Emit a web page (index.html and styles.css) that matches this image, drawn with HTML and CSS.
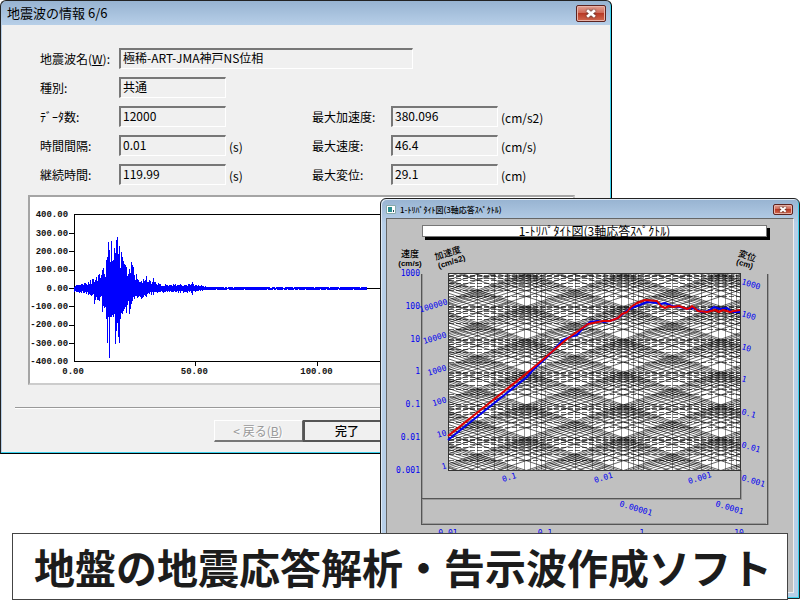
FILE: index.html
```html
<!DOCTYPE html>
<html lang="ja">
<head>
<meta charset="utf-8">
<title>地盤の地震応答解析・告示波作成ソフト</title>
<link rel="stylesheet" href="styles.css">
</head>
<body>
<main class="desktop">
  <section class="window wave-window">
    <header class="titlebar">
      <h1 class="caption">地震波の情報 6/6</h1>
      <button class="close" type="button" aria-label="閉じる"><svg viewBox="0 0 12 10"><path d="M3 2.5 9 7.5M9 2.5 3 7.5"/></svg></button>
    </header>
    <form class="wave-body">
      <div class="fields">
        <label class="label" for="name">地震波名(<u>W</u>):</label>
        <input class="field wide" id="name" value="極稀-ART-JMA神戸NS位相" readonly>
        <label class="label first" for="kind">種別:</label>
        <input class="field" id="kind" value="共通" readonly>
        <label class="label first" for="count">ﾃﾞｰﾀ数:</label>
        <input class="field" id="count" value="12000" readonly>
        <label class="label second" for="acc">最大加速度:</label>
        <input class="field" id="acc" value="380.096" readonly>
        <span class="unit">(cm/s2)</span>
        <label class="label first" for="step">時間間隔:</label>
        <input class="field" id="step" value="0.01" readonly>
        <span class="unit">(s)</span>
        <label class="label second" for="vel">最大速度:</label>
        <input class="field" id="vel" value="46.4" readonly>
        <span class="unit">(cm/s)</span>
        <label class="label first" for="dur">継続時間:</label>
        <input class="field" id="dur" value="119.99" readonly>
        <span class="unit">(s)</span>
        <label class="label second" for="dis">最大変位:</label>
        <input class="field" id="dis" value="29.1" readonly>
        <span class="unit">(cm)</span>
      </div>
      <svg class="wave-chart" viewBox="30 197 542 186">
        <path class="axis" d="M381 214.5H74.5V361.5H560V214.5H380M74 288.5H560M69 233.5H74M69 251.5H74M69 270.5H74M69 288.5H74M69 306.5H74M69 325.5H74M69 343.5H74M195.5 361V366M316.5 361V366"/>
        <path class="wave" id="wave"/>
        <g class="ylabels">
          <text x="68" y="217">400.00</text><text x="68" y="236">300.00</text><text x="68" y="254">200.00</text><text x="68" y="272">100.00</text><text x="68" y="291">0.00</text><text x="68" y="309">-100.00</text><text x="68" y="327">-200.00</text><text x="68" y="346">-300.00</text><text x="68" y="364">-400.00</text>
        </g>
        <g class="xlabels">
          <text x="73" y="374">0.00</text><text x="194" y="374">50.00</text><text x="316" y="374">100.00</text>
        </g>
      </svg>
      <div class="actions">
        <button class="push" type="button" disabled>&lt; 戻る(<u>B</u>)</button>
        <button class="push default" type="button">完了</button>
      </div>
    </form>
  </section>

  <section class="window spectrum-window">
    <header class="titlebar">
      <svg class="app-icon" viewBox="0 0 10 9"><path fill="#fff" stroke="#8aa" d="M.5.5h9v8h-9z"/><path fill="#2a8f8f" d="M2 2h4v5H2z"/><path fill="#245" d="M7 5h1v2H7z"/></svg>
      <h2 class="caption">1-ﾄﾘﾊﾟﾀｲﾄ図(3軸応答ｽﾍﾟｸﾄﾙ)</h2>
      <button class="close" type="button" aria-label="閉じる"><svg viewBox="0 0 12 10"><path d="M3 2.5 9 7.5M9 2.5 3 7.5"/></svg></button>
    </header>
    <div class="client">
      <h3 class="plot-title">1-ﾄﾘﾊﾟﾀｲﾄ図(3軸応答ｽﾍﾟｸﾄﾙ)</h3>
      <svg class="plot" viewBox="387 240 406 352">
        <defs><clipPath id="area"><rect x="448" y="273" width="292" height="198"/></clipPath></defs>
        <path class="frame-light" d="M422.5 274V523.5H766M741.5 470V499.5H423M768.5 274V525"/>
        <path class="frame" d="M421.5 274V524.5H767.5V274M740.5 470V498.5H422"/>
        <rect x="448" y="273" width="292" height="198" fill="#fff"/>
        <g clip-path="url(#area)">
          <path class="slanted" id="slanted"/>
          <path class="columns" id="columns"/>
          <path class="rows" id="rows"/>
        </g>
        <rect class="border" x="448.5" y="273.5" width="292" height="197"/>
        <polyline class="blue" points="448,440 527,377 532,371 547,357 563,340 570,337 577,335 583,328 590,322 598,321 604,322 610,321 618,318 628,310 634,307 640,305 647,302 657,303 661,304 665,303 672,306 680,307 687,309 693,308 702,312 708,311 714,307 720,309 727,308 732,312 740,312"/>
        <polyline class="red" points="448,436 527,373 547,356 567,339 588,324 598,322 603,321 610,321 618,318 622,314 627,312 631,307 637,303 645,300 657,301 661,306 665,308 669,306 673,307 679,306 687,309 690,308 692,306 698,311 707,312 715,310 719,312 723,310 730,312 734,311 740,310"/>
        <g class="heading">
          <text x="410" y="257">速度</text><text x="410" y="266" class="small">(cm/s)</text>
          <g transform="rotate(-18 449 257)"><text x="449" y="256">加速度</text><text x="450" y="265" class="small">(cm/s2)</text></g>
          <g transform="rotate(18 747 257)"><text x="747" y="259">変位</text><text x="747" y="267" class="small">(cm)</text></g>
        </g>
        <g class="ticks end">
          <text x="420" y="276">1000</text><text x="420" y="309">100</text><text x="420" y="342">10</text><text x="420" y="374">1</text><text x="420" y="407">0.1</text><text x="420" y="440">0.01</text><text x="420" y="473">0.001</text>
        </g>
        <g class="ticks end">
          <text transform="translate(448 304) rotate(-17)">100000</text><text transform="translate(447 337) rotate(-17)">10000</text><text transform="translate(447 370) rotate(-17)">1000</text><text transform="translate(447 402) rotate(-17)">100</text><text transform="translate(447 435) rotate(-17)">10</text><text transform="translate(447 468) rotate(-17)">1</text>
        </g>
        <g class="ticks">
          <text transform="translate(741 284) rotate(17)">1000</text><text transform="translate(741 316) rotate(17)">100</text><text transform="translate(741 349) rotate(17)">10</text><text transform="translate(741 381) rotate(17)">1</text><text transform="translate(741 414) rotate(17)">0.1</text><text transform="translate(741 447) rotate(17)">0.01</text><text transform="translate(741 480) rotate(17)">0.001</text>
          <text transform="translate(503 482) rotate(-17)">0.1</text><text transform="translate(595 483) rotate(-17)">0.01</text><text transform="translate(689 484) rotate(-17)">0.001</text>
          <text transform="translate(619 506) rotate(17)">0.00001</text><text transform="translate(715 506) rotate(17)">0.0001</text>
        </g>
        <g class="ticks middle">
          <text x="448" y="536">0.01</text><text x="545" y="536">0.1</text><text x="642" y="536">1</text><text x="739" y="536">10</text>
        </g>
      </svg>
    </div>
  </section>

  <p class="banner">地盤の地震応答解析・告示波作成ソフト</p>
</main>
<script src="charts.js"></script>
</body>
</html>
```

FILE: styles.css
```css
* { box-sizing: border-box; }

body {
  margin: 0;
  background: #fff;
  color: #000;
  font: 12px/16px "Noto Sans CJK JP", sans-serif;
}

h1, h2, h3, p { margin: 0; font-weight: 400; }

.desktop {
  position: relative;
  min-height: 100vh;
  overflow: hidden;
}

.window {
  position: absolute;
  border: 1px solid #222;
  border-radius: 6px 6px 0 0;
  background: linear-gradient(#97b3d1, #b7cfe8 24px);
}

.wave-window {
  top: 0;
  left: 0;
  width: 76.5%;
  padding: 0 1px 1px;
  border-right-color: #000;
  border-bottom: 1px solid #000;
  box-shadow: inset -1px -1px #3cd2ee;
}

.spectrum-window {
  top: 198px;
  left: 47.5%;
  right: 0;
  bottom: 1px;
  display: flex;
  flex-direction: column;
  padding: 0 5px 5px;
  box-shadow: inset -1px -1px #3cd2ee, inset 1px 1px #dfeaf6;
}

.titlebar {
  display: flex;
  align-items: center;
  height: 24px;
  padding: 0 4px 0 5px;
}

.caption {
  flex: 1;
  font-size: 13px;
  line-height: 20px;
  white-space: nowrap;
}

.close {
  display: flex;
  justify-content: center;
  align-items: center;
  width: 30px;
  height: 17px;
  padding: 0;
  border: 1px solid #5c2320;
  border-radius: 2px;
  background: linear-gradient(#e3a194, #cf6a58 45%, #b93a26 50%, #d26a50);
  box-shadow: inset 0 0 0 1px #e9b3a8;
}

.close svg { width: 16px; height: 13px; }
.close path { fill: none; stroke: #fff; stroke-width: 2.2; filter: drop-shadow(0 0 1px #333); }

.spectrum-window .titlebar { height: 19px; padding: 2px 1px 0 0; gap: 4px; }
.spectrum-window .caption { font-size: 8px; line-height: 12px; font-weight: 500; }
.spectrum-window .close { width: 20px; height: 11px; }
.spectrum-window .close svg { width: 12px; height: 9px; }
.app-icon { width: 10px; height: 9px; }

.wave-body {
  padding: 23px 35px 10px 26px;
  background: #f0f0f0;
}

.fields {
  display: grid;
  grid-template-columns: 79px 107px 86px 79px 107px 1fr;
  grid-auto-rows: 20px;
  row-gap: 9px;
  padding-left: 12px;
}

.label { align-self: end; line-height: 18px; white-space: nowrap; }
.first { grid-column: 1; }
.second { grid-column: 4; }
.unit { align-self: end; padding-left: 3px; line-height: 16px; }

.field {
  width: 100%;
  min-width: 0;
  height: 21px;
  padding: 0 2px 3px;
  border: 1px solid #fff;
  border-top: 2px solid #777;
  border-left: 2px solid #777;
  border-radius: 0;
  outline: 0;
  background: #f0f0f0;
  color: #000;
  font: inherit;
}

.wide { grid-column: 2 / 6; width: 294px; }

.wave-chart {
  display: block;
  width: 100%;
  margin-top: 11px;
  border: 2px solid #a5a5a5;
  border-right-color: #ccc;
  border-bottom-color: #ccc;
  background: #fff;
}

.axis { fill: none; stroke: #000; shape-rendering: crispEdges; }
.wave { fill: none; stroke: #00f; shape-rendering: crispEdges; }

.ylabels, .xlabels { font: bold 9px "Liberation Mono", monospace; fill: #111; }
.ylabels { text-anchor: end; }
.xlabels { text-anchor: middle; }

.actions {
  display: flex;
  justify-content: center;
  margin: 22px -15px 0 -13px;
  padding-top: 12px;
  border-top: 1px solid #999;
  box-shadow: inset 0 1px #fff;
}

.push {
  width: 89px;
  height: 22px;
  padding: 0;
  border: 1px solid #fff;
  border-right-color: #666;
  border-bottom: 2px solid #777;
  border-radius: 0;
  background: #f0f0f0;
  color: #000;
  font: inherit;
}

.push:disabled { color: #999; text-shadow: 1px 1px #fff; }
.push.default { border: 2px solid #555; font-weight: 500; }

.client {
  flex: 1;
  min-height: 0;
  overflow: hidden;
  padding-top: 6px;
  border: 1px solid #666;
  border-right-color: #eee;
  border-bottom-color: #eee;
  background: #c0c0c0;
}

.plot-title {
  height: 12px;
  margin: 0 26px 3px 35px;
  border: 1px solid #777;
  background: #fff;
  box-shadow: 3px 3px #000;
  font-size: 12px;
  line-height: 10px;
  text-align: center;
}

.plot { display: block; width: 100%; }

.frame { fill: none; stroke: #555; shape-rendering: crispEdges; }
.frame-light { fill: none; stroke: #999; shape-rendering: crispEdges; }
.border { fill: none; stroke: #333; shape-rendering: crispEdges; }
.rows { fill: none; stroke: #000; stroke-opacity: 0.6; stroke-dasharray: 5 2; shape-rendering: crispEdges; }
.columns { fill: none; stroke: #000; stroke-opacity: 0.4; shape-rendering: crispEdges; }
.slanted { fill: none; stroke: #000; stroke-width: 0.6; }
.red, .blue { fill: none; stroke-width: 2; stroke-linejoin: round; }
.red { stroke: #e00000; }
.blue { stroke: #0000f0; }

.heading { font-size: 9px; font-weight: 500; text-anchor: middle; }
.heading .small { font: bold 8px "Liberation Sans", sans-serif; }
.ticks { font: 8px "DejaVu Sans Mono", monospace; fill: #0000f0; }
.end { text-anchor: end; }
.middle { text-anchor: middle; }

.banner {
  position: absolute;
  right: 12px;
  bottom: 0;
  left: 12px;
  height: 67px;
  padding-left: 6px;
  border: 1px solid #444;
  background: #fff;
  color: #1c1c1c;
  font-size: 41px;
  font-weight: 700;
  line-height: 64px;
  text-align: center;
  white-space: nowrap;
}
```

FILE: charts.js
```js
// Acceleration record: [x, rise, fall] envelope around the zero line, in pixels.
const envelope = [
  [74, 2, 5], [80, 5, 4], [87, 7, 6], [95, 10, 12], [100, 15, 14], [104, 22, 20],
  [108, 36, 28], [111, 40, 30], [118, 42, 34], [122, 36, 32], [126, 22, 24],
  [131, 22, 22], [136, 15, 13], [141, 9, 10], [146, 9, 8], [153, 7, 5],
  [160, 4, 4], [175, 4, 4], [192, 4, 4], [200, 3, 2], [210, 1, 1], [365, 1, 1]
];
const peaks = [
  [94, 6, 15], [102, 18, 23], [106, 28, 30], [107, 31, 54], [108, 46, 28], [109, 38, 69],
  [110, 26, 28], [111, 47, 28], [112, 27, 26], [113, 28, 28], [114, 40, 25], [115, 35, 55],
  [116, 48, 42], [117, 51, 34], [118, 34, 48], [119, 42, 54], [120, 20, 30], [122, 31, 25],
  [124, 24, 20], [127, 12, 16], [128, 14, 12], [129, 19, 25], [131, 26, 15], [132, 23, 12],
  [133, 21, 8], [146, 12, 8], [153, 10, 6], [192, 6, 6]
];
let seed = 11;
const random = () => (seed = (seed * 16807) % 2147483647) / 2147483647;
let wave = "";
for (let x = 74; x < 366; x++) {
  const i = Math.max(1, envelope.findIndex(p => p[0] >= x));
  const [a, b] = [envelope[i - 1], envelope[i]];
  const t = (x - a[0]) / (b[0] - a[0]);
  const amp = k => (a[k] + (b[k] - a[k]) * t) * (0.45 + 0.55 * random());
  const peak = peaks.find(p => p[0] === x);
  const up = peak ? peak[1] : amp(1);
  const down = peak ? peak[2] : amp(2);
  wave += `M${x + 0.5} ${Math.round(288 - up)}V${Math.round(289 + down)}`;
}
document.getElementById("wave").setAttribute("d", wave);

// Tripartite grid: period 0.01-10 s, velocity 0.001-1000 cm/s.
const left = 448.5, right = 740.5, bottom = 470.5, ceiling = 273.5;
const dx = (right - left) / 3, dy = (bottom - ceiling) / 6;
const px = logT => Math.floor(left + (logT + 2) * dx) + 0.5;
const py = logV => bottom - (logV + 3) * dy;
const k = Math.log10(2 * Math.PI);
let columns = "", rows = "", slanted = "";
for (let d = -9; d < 9; d++) {
  for (let m = 1; m < 10; m++) {
    const v = d + Math.log10(m);
    if (v >= -2 && v <= 1) columns += `M${px(v)} ${ceiling}V${bottom}`;
    if (v >= -3 && v <= 3) rows += `M${left} ${Math.floor(py(v)) + 0.5}H${right}`;
    slanted += `M${left} ${py(v - 2 - k)}L${right} ${py(v + 1 - k)}`;
    slanted += `M${left} ${py(v + 2 + k)}L${right} ${py(v - 1 + k)}`;
  }
}
document.getElementById("columns").setAttribute("d", columns);
document.getElementById("rows").setAttribute("d", rows);
document.getElementById("slanted").setAttribute("d", slanted);
```
